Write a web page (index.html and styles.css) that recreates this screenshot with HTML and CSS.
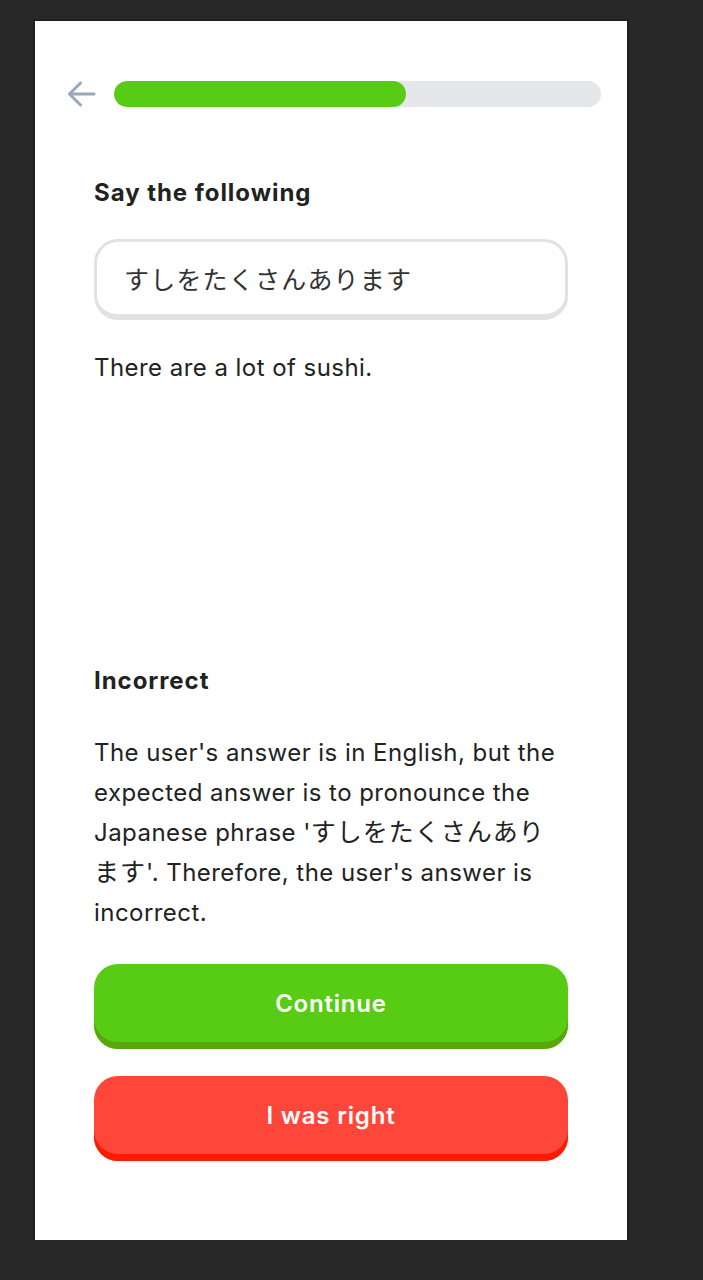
FILE: index.html
```html
<!DOCTYPE html>
<html lang="en">
<head>
<meta charset="utf-8">
<title>Say the following</title>
<link rel="stylesheet" href="styles.css">
</head>
<body>
<div class="panel">
  <div class="header">
    <button class="back" aria-label="Back">
      <svg width="28" height="26" viewBox="0 0 28 26" fill="none" stroke="#9aa8b9" stroke-width="3" stroke-linecap="round" stroke-linejoin="round">
        <path d="M12.5 2 L1.5 13 L12.5 24"/>
        <path d="M2 13 H26"/>
      </svg>
    </button>
    <div class="track"><div class="fill" style="width:60%"></div></div>
  </div>
  <div class="content">
    <h2 class="title">Say the following</h2>
    <div class="phrase">すしをたくさんあります</div>
    <p class="translation">There are a lot of sushi.</p>
    <div class="feedback">
      <h2 class="title">Incorrect</h2>
      <p class="explain">The user's answer is in English, but the expected answer is to pronounce the Japanese phrase '<span class="ja">すしをたくさんあります</span>'. Therefore, the user's answer is incorrect.</p>
      <button class="btn btn-green">Continue</button>
      <button class="btn btn-red">I was right</button>
    </div>
  </div>
</div>
</body>
</html>
```
FILE: styles.css
```css
html, body {
  margin: 0;
  padding: 0;
  background: #282828;
}
body {
  padding: 21px 0 0 35px;
  font-family: Inter, "Noto Sans CJK JP", sans-serif;
  color: #222;
}
.panel {
  width: 592px;
  height: 1219px;
  background: #fff;
  box-sizing: border-box;
  display: flex;
  flex-direction: column;
  padding-bottom: 79px;
  box-shadow: 0 0 0 2px #1f1f1f;
}
.header {
  display: flex;
  align-items: center;
  padding: 60px 26px 0 33px;
  gap: 18px;
}
.back {
  border: 0;
  background: none;
  padding: 0;
  width: 28px;
  height: 26px;
  display: flex;
}
.track {
  flex: 1;
  height: 26px;
  border-radius: 13px;
  background: #e5e7eb;
  overflow: hidden;
}
.fill {
  height: 100%;
  background: #58cc14;
  border-radius: 13px;
}
.content {
  flex: 1;
  display: flex;
  flex-direction: column;
  padding: 0 59px;
}
.title {
  margin: 0;
  font-size: 24px;
  font-weight: 700;
  line-height: 30px;
  letter-spacing: 0.95px;
  color: #222;
}
.content > .title {
  margin-top: 71px;
}
.phrase {
  margin-top: 31px;
  height: 72px;
  border: 3px solid #e2e2e2;
  border-bottom-width: 6px;
  border-radius: 24px;
  display: flex;
  align-items: center;
  padding: 0 28px 0 27px;
  font-size: 25px;
  letter-spacing: 1.2px;
  color: #333;
  font-family: "Noto Sans CJK JP", sans-serif;
}
.translation {
  margin: 33px 0 0;
  font-size: 24px;
  line-height: 30px;
  letter-spacing: 0.45px;
  color: #222;
}
.feedback {
  margin-top: auto;
  display: flex;
  flex-direction: column;
}
.explain {
  margin: 37px 0 0;
  font-size: 24px;
  line-height: 40px;
  letter-spacing: 0.45px;
  color: #222;
}
.ja {
  font-family: "Noto Sans CJK JP", sans-serif;
  font-size: 25px;
  line-height: 1;
  letter-spacing: 1px;
}
.btn {
  height: 85px;
  border: 0;
  border-radius: 24px;
  font-family: Inter, sans-serif;
  font-size: 24px;
  font-weight: 600;
  letter-spacing: 0.8px;
  color: #fff;
  padding: 0 0 7px;
}
.btn-green {
  margin-top: 31px;
  background: #58cc14;
  box-shadow: inset 0 -7px 0 #58a80d;
}
.btn-red {
  margin-top: 27px;
  background: #ff463a;
  box-shadow: inset 0 -7px 0 #ff1a00;
}
```
